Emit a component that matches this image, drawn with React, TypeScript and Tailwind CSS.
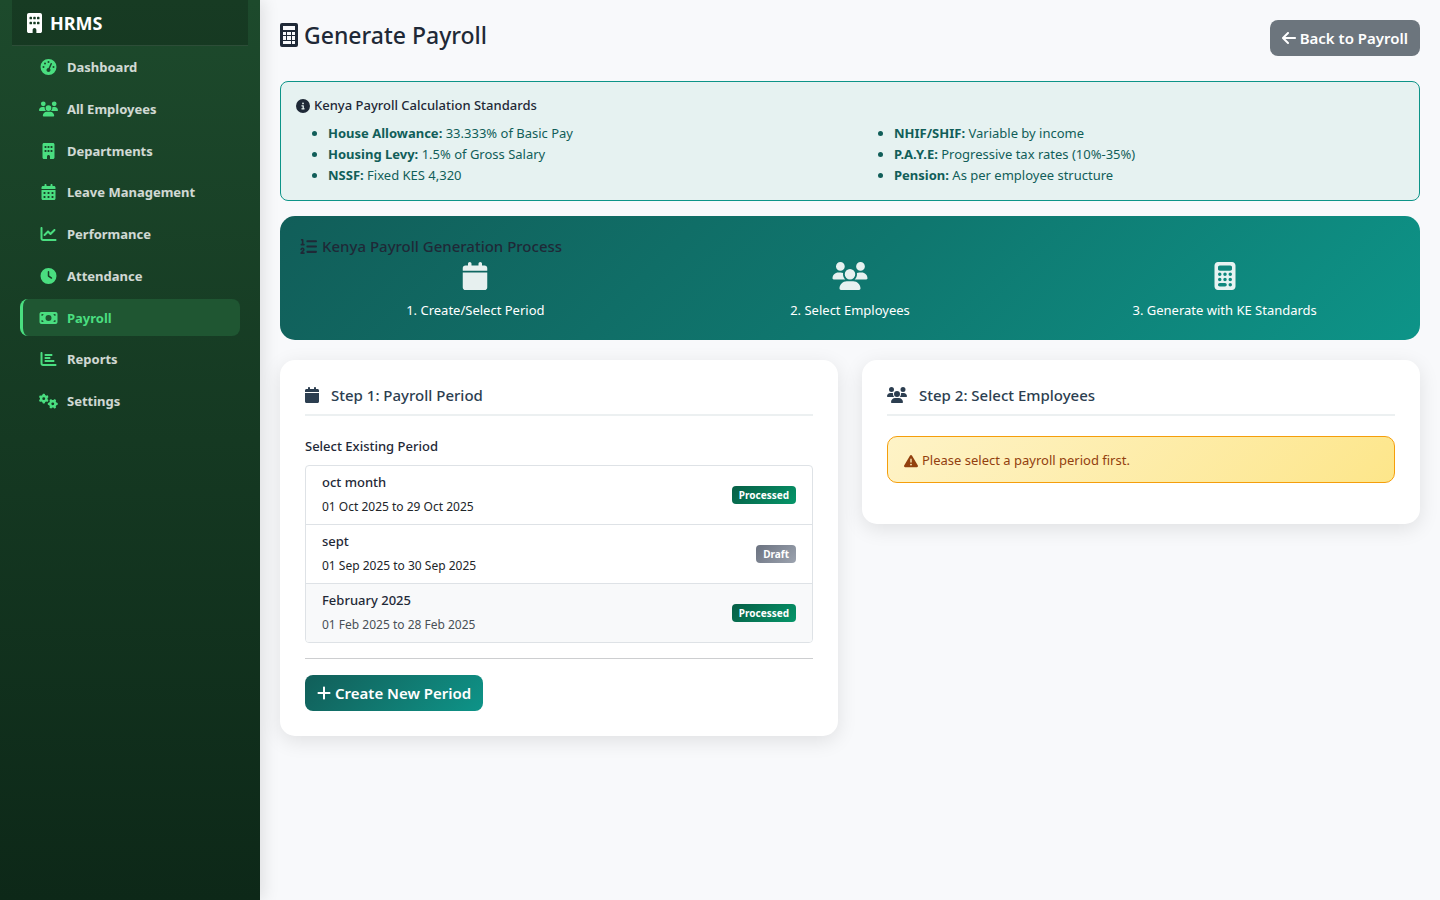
import React from 'react';
import {
  FaArrowLeft,
  FaBuilding,
  FaCalculator,
  FaCalendar,
  FaCalendarDays,
  FaChartBar,
  FaChartLine,
  FaCircleInfo,
  FaClock,
  FaGaugeHigh,
  FaGears,
  FaListOl,
  FaMoneyBill,
  FaPlus,
  FaTriangleExclamation,
  FaUsers,
} from 'react-icons/fa6';

const navItems = [
  { label: 'Dashboard', icon: FaGaugeHigh },
  { label: 'All Employees', icon: FaUsers },
  { label: 'Departments', icon: FaBuilding },
  { label: 'Leave Management', icon: FaCalendarDays },
  { label: 'Performance', icon: FaChartLine },
  { label: 'Attendance', icon: FaClock },
  { label: 'Payroll', icon: FaMoneyBill, active: true },
  { label: 'Reports', icon: FaChartBar },
  { label: 'Settings', icon: FaGears },
];

const standards = [
  [
    { name: 'House Allowance:', value: '33.333% of Basic Pay' },
    { name: 'Housing Levy:', value: '1.5% of Gross Salary' },
    { name: 'NSSF:', value: 'Fixed KES 4,320' },
  ],
  [
    { name: 'NHIF/SHIF:', value: 'Variable by income' },
    { name: 'P.A.Y.E:', value: 'Progressive tax rates (10%-35%)' },
    { name: 'Pension:', value: 'As per employee structure' },
  ],
];

const steps = [
  { label: '1. Create/Select Period', icon: FaCalendar },
  { label: '2. Select Employees', icon: FaUsers },
  { label: '3. Generate with KE Standards', icon: FaCalculator },
];

const periods = [
  { id: 3, name: 'oct month', dates: '01 Oct 2025 to 29 Oct 2025', status: 'Processed' },
  { id: 2, name: 'sept', dates: '01 Sep 2025 to 30 Sep 2025', status: 'Draft' },
  { id: 1, name: 'February 2025', dates: '01 Feb 2025 to 28 Feb 2025', status: 'Processed', hovered: true },
];

// Calculator with square keys, used next to the page title
const TitleCalculator: React.FC = () => (
  <svg viewBox="0 0 18 24" className="h-6 w-[18px] fill-current" aria-hidden="true">
    <path
      fillRule="evenodd"
      d="M2 0h14a2 2 0 0 1 2 2v20a2 2 0 0 1-2 2H2a2 2 0 0 1-2-2V2a2 2 0 0 1 2-2zM3 3v4h12V3zM3 9v3h3V9zM7 9v3h4V9zM12 9v3h3V9zM3 13v4h3v-4zM7 13v4h4v-4zM12 13v4h3v-4zM3 18v3h8v-3zM12 18v3h3v-3z"
    />
  </svg>
);

const Sidebar: React.FC = () => (
  <aside className="relative z-10 w-[260px] shrink-0 bg-linear-to-b from-[#1d4a2c] to-[#0d2818] px-3 shadow-[4px_0_15px_rgba(0,0,0,0.1)]">
    <div className="flex h-[46px] items-center gap-2 border-b border-white/10 bg-black/20 px-[15px] text-lg font-bold text-white">
      <FaBuilding className="h-5 w-[15px]" />
      HRMS
    </div>
    <nav className="mx-2 mt-[2px] flex h-[371px] flex-col justify-between">
      {navItems.map(({ label, icon: Icon, active }) => (
        <a
          key={label}
          href="#"
          className={
            active
              ? 'flex items-center gap-[9px] rounded-lg border-l-[3px] border-[#4ade80] bg-[#1f5632] px-[15px] pt-2 pb-[7px] text-[13px] leading-[21px] font-bold text-[#4ade80]'
              : 'flex items-center gap-[9px] rounded-lg border-l-[3px] border-transparent px-[15px] pt-2 pb-[7px] text-[13px] leading-[21px] font-bold text-white/80'
          }
        >
          <span className="flex w-5 justify-center text-[#4ade80]">
            <Icon className="h-4 w-[19px] shrink-0" />
          </span>
          <span className="pt-px">{label}</span>
        </a>
      ))}
    </nav>
  </aside>
);

const StatusBadge: React.FC<{ status: string }> = ({ status }) => (
  <span
    className={
      status === 'Draft'
        ? 'rounded bg-linear-135 from-[#6b7280] to-[#9ca3af] px-[7px] text-[10px] leading-[18px] font-bold text-white'
        : 'rounded bg-linear-135 from-[#065f46] to-[#059669] px-[7px] text-[10px] leading-[18px] font-bold text-white'
    }
  >
    {status}
  </span>
);

const App: React.FC = () => {
  return (
    <div className="flex min-h-screen bg-[#f8f9fb] font-['Noto_Sans','Open_Sans',sans-serif] text-sm text-[#1f2937]">
      <Sidebar />

      <main className="min-w-0 flex-1 p-5">
        {/* Page header */}
        <div className="mb-[25px] flex items-start justify-between">
          <h1 className="flex items-center gap-[6px] text-[23px] leading-[30px] font-medium">
            <TitleCalculator />
            Generate Payroll
          </h1>
          <button className="flex h-9 items-center gap-1 rounded-lg bg-[#6c757d] px-3 text-[15px] font-semibold text-white">
            <FaArrowLeft className="h-4 w-[14px]" />
            <span className="pt-px">Back to Payroll</span>
          </button>
        </div>

        {/* Calculation standards */}
        <section className="rounded-lg border border-[#0d9488] bg-[#e6f2f1] px-[15px] pt-[15px] pb-[14px]">
          <h2 className="mb-[9px] flex items-center gap-1 text-[13px] leading-[17px] font-medium">
            <FaCircleInfo size={14} />
            Kenya Payroll Calculation Standards
          </h2>
          <div className="grid grid-cols-2 gap-6 text-[#115e59]">
            {standards.map((column, i) => (
              <ul key={i} className="list-disc pl-8 text-[13px] leading-[21px]">
                {column.map((item) => (
                  <li key={item.name}>
                    <strong className="font-bold">{item.name}</strong> {item.value}
                  </li>
                ))}
              </ul>
            ))}
          </div>
        </section>

        {/* Process steps */}
        <section className="mt-[15px] rounded-[15px] bg-linear-135 from-[#115e59] via-[#0f766e] to-[#0d9488] px-5 pt-5 pb-[19px]">
          <h2 className="flex items-center gap-[5px] text-[15px] leading-5 font-medium">
            <FaListOl size={17} />
            Kenya Payroll Generation Process
          </h2>
          <div className="mt-[6px] grid grid-cols-3 gap-6 text-white">
            {steps.map(({ label, icon: Icon }) => (
              <div key={label} className="flex flex-col items-center gap-[10px] text-[13px] leading-[21px]">
                <Icon className="h-7 w-9 opacity-90" />
                {label}
              </div>
            ))}
          </div>
        </section>

        <div className="mt-5 grid grid-cols-2 items-start gap-6">
          {/* Step 1 */}
          <section className="rounded-[15px] bg-white p-[25px] shadow-[0_5px_20px_rgba(0,0,0,0.1)]">
            <h2 className="mb-5 flex items-center gap-3 border-b-2 border-[#ecf0f1] pb-[9px] text-[15px] leading-5 font-medium text-[#2c3e50]">
              <FaCalendar className="h-4 w-[14px]" />
              Step 1: Payroll Period
            </h2>

            <h3 className="mb-2 text-[13px] leading-[21px] font-medium">Select Existing Period</h3>
            <div className="divide-y divide-[#dee2e6] overflow-hidden rounded border border-[#dee2e6]">
              {periods.map((period) => (
                <a
                  key={period.id}
                  href={`#period-${period.id}`}
                  className={
                    period.hovered
                      ? 'flex items-center justify-between bg-[#f8f9fa] px-4 py-2 text-[#495057]'
                      : 'flex items-center justify-between px-4 py-2 text-[#212529]'
                  }
                >
                  <div>
                    <h4 className="mb-[6px] text-[13px] leading-[17px] font-medium text-[#1f2937]">{period.name}</h4>
                    <p className="text-xs leading-[19px]">{period.dates}</p>
                  </div>
                  <StatusBadge status={period.status} />
                </a>
              ))}
            </div>

            <hr className="mt-[15px] mb-4 border-[#cdced0]" />

            <button className="flex h-9 items-center gap-1 rounded-lg bg-linear-135 from-[#115e59] to-[#0d9488] px-3 text-[15px] font-semibold text-white">
              <FaPlus className="h-4 w-[14px]" />
              <span className="pt-px">Create New Period</span>
            </button>
          </section>

          {/* Step 2 */}
          <section className="rounded-[15px] bg-white p-[25px] shadow-[0_5px_20px_rgba(0,0,0,0.1)]">
            <h2 className="mb-5 flex items-center gap-3 border-b-2 border-[#ecf0f1] pb-[9px] text-[15px] leading-5 font-medium text-[#2c3e50]">
              <FaUsers className="h-4 w-5" />
              Step 2: Select Employees
            </h2>
            <div
              role="alert"
              className="mb-4 flex items-center gap-1 rounded-[10px] border border-[#f59e0b] bg-linear-135 from-[#fef3c7] to-[#fde68a] px-4 pt-[13px] pb-[11px] text-[13px] leading-[21px] text-[#92400e]"
            >
              <FaTriangleExclamation size={14} />
              Please select a payroll period first.
            </div>
          </section>
        </div>
      </main>
    </div>
  );
};

export default App;
